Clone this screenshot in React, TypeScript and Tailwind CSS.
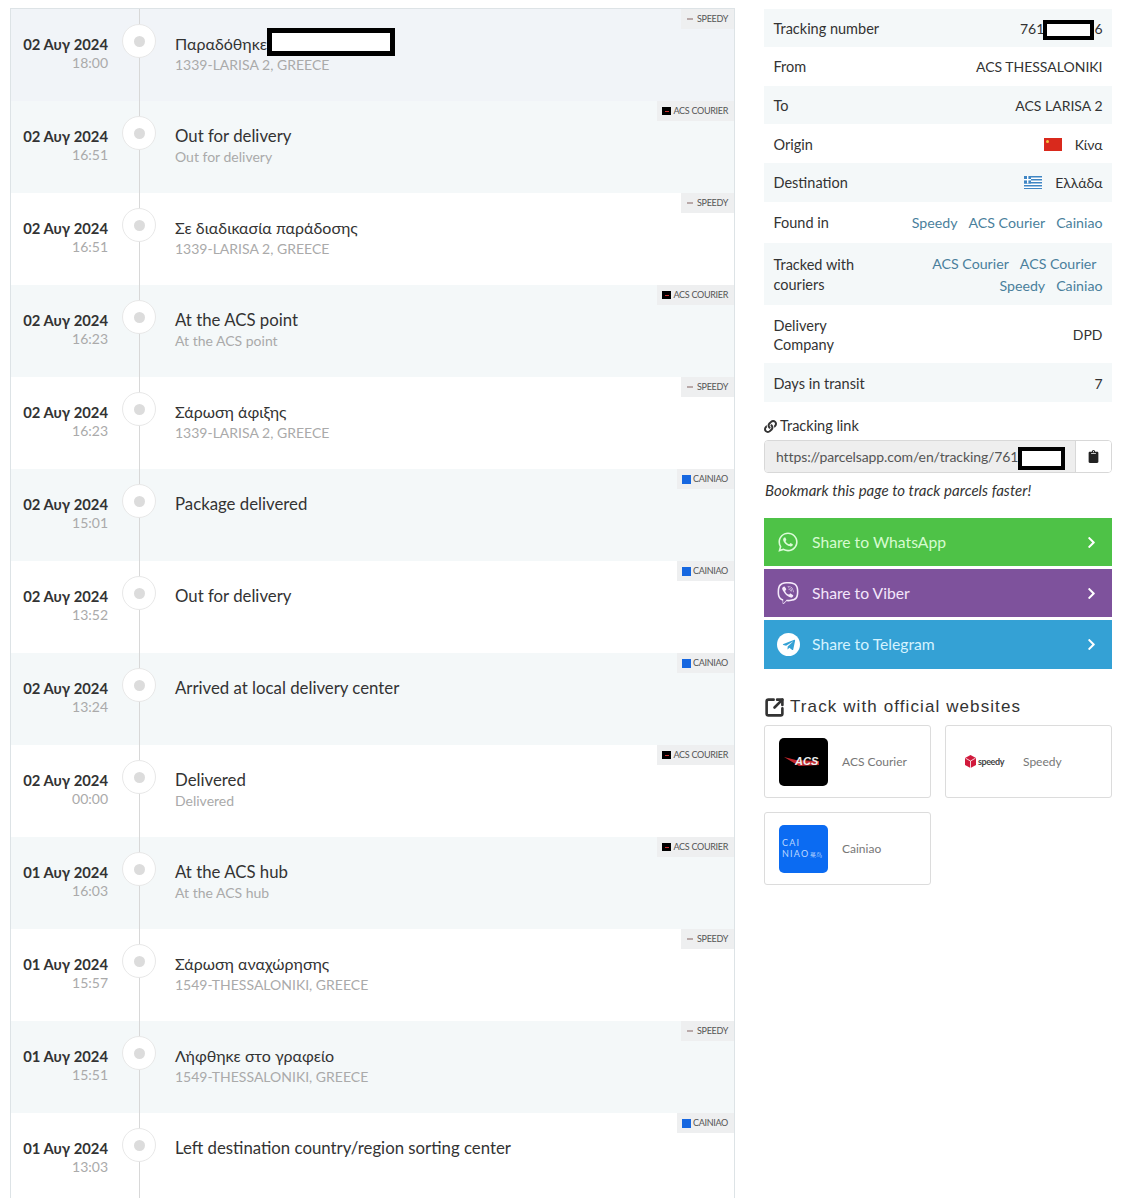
import { FaChevronRight, FaClipboard, FaLink, FaTelegramPlane, FaViber, FaWhatsapp } from "react-icons/fa";
import { LuSquareArrowOutUpRight } from "react-icons/lu";

type Courier = "speedy" | "acs" | "cainiao";

type TrackingEvent = {
  date: string;
  time: string;
  title: string;
  sub?: string;
  courier: Courier;
};

const events: TrackingEvent[] = [
  { date: "02 Αυγ 2024", time: "18:00", title: "Παραδόθηκε", sub: "1339-LARISA 2, GREECE", courier: "speedy" },
  { date: "02 Αυγ 2024", time: "16:51", title: "Out for delivery", sub: "Out for delivery", courier: "acs" },
  { date: "02 Αυγ 2024", time: "16:51", title: "Σε διαδικασία παράδοσης", sub: "1339-LARISA 2, GREECE", courier: "speedy" },
  { date: "02 Αυγ 2024", time: "16:23", title: "At the ACS point", sub: "At the ACS point", courier: "acs" },
  { date: "02 Αυγ 2024", time: "16:23", title: "Σάρωση άφιξης", sub: "1339-LARISA 2, GREECE", courier: "speedy" },
  { date: "02 Αυγ 2024", time: "15:01", title: "Package delivered", courier: "cainiao" },
  { date: "02 Αυγ 2024", time: "13:52", title: "Out for delivery", courier: "cainiao" },
  { date: "02 Αυγ 2024", time: "13:24", title: "Arrived at local delivery center", courier: "cainiao" },
  { date: "02 Αυγ 2024", time: "00:00", title: "Delivered", sub: "Delivered", courier: "acs" },
  { date: "01 Αυγ 2024", time: "16:03", title: "At the ACS hub", sub: "At the ACS hub", courier: "acs" },
  { date: "01 Αυγ 2024", time: "15:57", title: "Σάρωση αναχώρησης", sub: "1549-THESSALONIKI, GREECE", courier: "speedy" },
  { date: "01 Αυγ 2024", time: "15:51", title: "Λήφθηκε στο γραφείο", sub: "1549-THESSALONIKI, GREECE", courier: "speedy" },
  { date: "01 Αυγ 2024", time: "13:03", title: "Left destination country/region sorting center", courier: "cainiao" },
];

function CourierBadge({ courier }: { courier: Courier }) {
  return (
    <div className="absolute right-0 top-0 flex h-[20px] items-center gap-[2px] bg-[#eeeff0] pl-[5px] pr-[6px] text-[9px] tracking-[-0.3px] text-[#555]">
      {courier === "speedy" && (
        <>
          <span className="mx-[1px] h-[2px] w-[6px] bg-[#b9a9a9]" />
          <span className="ml-[1px]">SPEEDY</span>
        </>
      )}
      {courier === "acs" && (
        <>
          <span className="flex h-[8px] w-[9px] items-center justify-center bg-black">
            <span className="h-[1px] w-[4px] bg-[#c33]" />
          </span>
          <span>ACS COURIER</span>
        </>
      )}
      {courier === "cainiao" && (
        <>
          <span className="h-[9px] w-[9px] bg-[#1667e0]" />
          <span>CAINIAO</span>
        </>
      )}
    </div>
  );
}

function EventRow({ event, index }: { event: TrackingEvent; index: number }) {
  let bg = index % 2 === 1 ? "bg-[#f4f8f9]" : "bg-white";
  if (index === 0) bg = "bg-[#f1f4f8]";
  const greek = /[\u0370-\u03ff]/.test(event.title);

  return (
    <div className={`relative flex h-[92px] shrink-0 ${bg}`}>
      <div className="w-[97px] pt-[26px] text-right">
        <div className="text-[14.8px] font-bold leading-[18px] text-[#333]">{event.date}</div>
        <div className="text-[14px] leading-[20px] text-[#aaa]">{event.time}</div>
      </div>
      <div className="relative w-[63px]">
        <div className="absolute bottom-0 left-[30.5px] top-0 w-px bg-[#d8d8d8]" />
        <div className="absolute left-[14px] top-[15px] flex h-[34px] w-[34px] items-center justify-center rounded-full border border-[#e8e8e8] bg-white">
          <div className="h-[11px] w-[11px] rounded-full bg-[#dcdcdc]" />
        </div>
      </div>
      <div className="pl-[4px] pt-[23px]">
        <div
          className={`flex h-[23px] items-center leading-[23px] text-[#333] ${
            greek ? "text-[16px]" : "text-[16.8px]"
          }`}
        >
          {event.title}
          {index === 0 && (
            <span className="h-[28px] w-[128px] -translate-y-[2px] border-[5px] border-black bg-white" />
          )}
        </div>
        {event.sub && <div className="text-[14px] leading-[20px] text-[#aaa]">{event.sub}</div>}
      </div>
      <CourierBadge courier={event.courier} />
    </div>
  );
}

function InfoRow({
  label,
  tinted,
  className,
  children,
}: {
  label: React.ReactNode;
  tinted?: boolean;
  className?: string;
  children: React.ReactNode;
}) {
  return (
    <div
      className={`flex items-center justify-between px-[9.5px] text-[14px] text-[#333] ${
        tinted ? "bg-[#f4f8f9]" : "bg-white"
      } ${className}`}
    >
      <div className="shrink-0 text-[14.5px] leading-[19px]">{label}</div>
      <div className="text-right">{children}</div>
    </div>
  );
}

function CourierLink({ children }: { children: React.ReactNode }) {
  return <span className="ml-[11px] text-[14.2px] text-[#4a7f9c]">{children}</span>;
}

function ChinaFlag() {
  return (
    <svg width="18" height="13" viewBox="0 0 18 13" className="mr-[13px]">
      <rect width="18" height="13" fill="#d9291c" />
      <circle cx="3.5" cy="3.5" r="1.5" fill="#f5c542" />
    </svg>
  );
}

function GreeceFlag() {
  return (
    <svg width="18" height="13" viewBox="0 0 18 13" className="mr-[13px]">
      <rect width="18" height="13" fill="#fff" />
      {[0, 3, 6, 9, 12].map((y) => (
        <rect key={y} y={y} width="18" height="1.5" fill="#3f86c4" />
      ))}
      <rect width="7" height="7.5" fill="#3f86c4" />
      <rect x="3" width="1.4" height="7.5" fill="#fff" />
      <rect y="3" width="7" height="1.4" fill="#fff" />
    </svg>
  );
}

function ShareButton({
  color,
  label,
  text,
  height,
  icon,
}: {
  color: string;
  label: string;
  text: string;
  height: string;
  icon: React.ReactNode;
}) {
  return (
    <div className={`flex items-center pl-[13px] pr-[14px] text-[15.7px] ${color} ${height} ${text}`}>
      <div className="flex w-[35px] justify-start">{icon}</div>
      <span className="pt-[1px]">{label}</span>
      <FaChevronRight className="ml-auto text-white" size={13} />
    </div>
  );
}

function SiteCard({ name, logo }: { name: string; logo: React.ReactNode }) {
  return (
    <div className="flex h-[73px] items-center rounded-[3px] border border-[#dcdcdc] bg-white pl-[14px]">
      <div className="flex w-[49px] items-center justify-center">{logo}</div>
      <span className="ml-[14px] text-[12px] text-[#777]">{name}</span>
    </div>
  );
}

export default function App() {
  return (
    <div
      className="flex h-[1198px] gap-[29px] overflow-hidden bg-white pl-[10px] pt-[8px]"
      style={{ fontFamily: "Lato, 'Noto Sans', sans-serif" }}
    >
      <div className="flex w-[725px] shrink-0 flex-col self-start border-x border-t border-[#dde3e6]">
        {events.map((event, i) => (
          <EventRow key={i} event={event} index={i} />
        ))}
      </div>

      <div className="mt-[1px] w-[348px] shrink-0">
        <InfoRow label="Tracking number" tinted className="relative h-[38px]">
          761
          <span className="inline-block w-[50px]" />6
          <span className="absolute right-[18px] top-[11px] h-[20px] w-[51px] border-[4px] border-black bg-white" />
        </InfoRow>
        <InfoRow label="From" className="h-[39px]">ACS THESSALONIKI</InfoRow>
        <InfoRow label="To" tinted className="h-[38px]">ACS LARISA 2</InfoRow>
        <InfoRow label="Origin" className="h-[39px] pt-[1px]">
          <span className="flex items-center justify-end">
            <ChinaFlag />
            Κίνα
          </span>
        </InfoRow>
        <InfoRow label="Destination" tinted className="h-[39px]">
          <span className="flex items-center justify-end">
            <GreeceFlag />
            Ελλάδα
          </span>
        </InfoRow>
        <InfoRow label="Found in" className="h-[41px]">
          <span className="whitespace-nowrap">
            <CourierLink>Speedy</CourierLink>
            <CourierLink>ACS Courier</CourierLink>
            <CourierLink>Cainiao</CourierLink>
          </span>
        </InfoRow>
        <InfoRow
          label={<span className="leading-[20px]">Tracked with<br />couriers</span>}
          tinted
          className="h-[62px] pt-[2px]"
        >
          <div className="whitespace-nowrap pr-[6px] leading-[22px]">
            <CourierLink>ACS Courier</CourierLink>
            <CourierLink>ACS Courier</CourierLink>
          </div>
          <div className="whitespace-nowrap leading-[22px]">
            <CourierLink>Speedy</CourierLink>
            <CourierLink>Cainiao</CourierLink>
          </div>
        </InfoRow>
        <InfoRow label={<>Delivery<br />Company</>} className="h-[58px] pt-[1px]">DPD</InfoRow>
        <InfoRow label="Days in transit" tinted className="h-[39px] pt-[1px]">7</InfoRow>

        <div className="mt-[14px] flex items-center text-[14.5px] leading-[20px] text-[#333]">
          <FaLink size={13} className="mr-[3px]" />
          Tracking link
        </div>
        <div className="relative mt-[4px] flex h-[33px] overflow-hidden rounded-[4px] border border-[#d8d8d8]">
          <div className="flex flex-1 items-center bg-[#eeeeee] pl-[11px] text-[14px] tracking-[-0.1px] text-[#555]">
            https://parcelsapp.com/en/tracking/761
          </div>
          <div className="flex w-[36px] items-center justify-center border-l border-[#d8d8d8] bg-white text-[#222]">
            <FaClipboard size={13} />
          </div>
          <span className="absolute left-[253px] top-[6px] h-[23px] w-[47px] border-[4px] border-black bg-white" />
        </div>
        <div className="mt-[7px] pl-[1px] text-[15px] italic leading-[20px] tracking-[0.05px] text-[#333]">
          Bookmark this page to track parcels faster!
        </div>

        <div className="mt-[18px] flex flex-col gap-[3px]">
          <ShareButton
            color="bg-[#4ec247]"
            text="text-[#d6fbd0]"
            height="h-[48px]"
            label="Share to WhatsApp"
            icon={<FaWhatsapp size={22} className="text-[#dcfbd8]" />}
          />
          <ShareButton
            color="bg-[#7e529c]"
            text="text-[#f3e6fb]"
            height="h-[48px]"
            label="Share to Viber"
            icon={<FaViber size={22} className="text-[#f5eafb]" />}
          />
          <ShareButton
            color="bg-[#34a1d5]"
            text="text-[#d5f3ff]"
            height="h-[49px]"
            label="Share to Telegram"
            icon={
              <span className="flex h-[23px] w-[23px] items-center justify-center rounded-full bg-white text-[#34a1d5]">
                <FaTelegramPlane size={14} />
              </span>
            }
          />
        </div>

        <div className="mt-[27px] flex items-center text-[#333]">
          <LuSquareArrowOutUpRight size={21} strokeWidth={3} className="mr-[5px]" />
          <span
            className="text-[17px] leading-[22px] tracking-[1.1px]"
            style={{ fontFamily: "'Liberation Sans', sans-serif" }}
          >
            Track with official websites
          </span>
        </div>

        <div className="mt-[7px] grid grid-cols-[167px_167px] gap-x-[14px] gap-y-[14px]">
          <SiteCard
            name="ACS Courier"
            logo={
              <svg width="49" height="48" viewBox="0 0 49 48">
                <rect width="49" height="48" rx="5" fill="#000" />
                <path d="M5 19 L17 22 L40 23 L40 27 L20 28 Z" fill="#c1272d" />
                <text x="16" y="27" fontSize="11" fontWeight="900" fontStyle="italic" fill="#eee" fontFamily="Liberation Sans">
                  ACS
                </text>
              </svg>
            }
          />
          <SiteCard
            name="Speedy"
            logo={
              <span className="flex items-center">
                <svg width="11" height="13" viewBox="0 0 11 13">
                  <path d="M5.5 0 L11 3 V10 L5.5 13 L0 10 V3 Z" fill="#d11a3c" />
                  <path d="M5.5 6 L5.5 13 M0.5 3.2 L5.5 6 L10.5 3.2" stroke="#fff" strokeWidth="0.8" fill="none" />
                </svg>
                <span className="ml-[2px] text-[9px] font-bold tracking-[-0.4px] text-[#444]">speedy</span>
              </span>
            }
          />
          <SiteCard
            name="Cainiao"
            logo={
              <span className="flex h-[48px] w-[49px] flex-col justify-center rounded-[5px] bg-[#0b6bf2] pl-[3px] text-[9px] leading-[11px] tracking-[1.2px] text-[#bcd8ff]">
                <span>CAI</span>
                <span className="whitespace-nowrap">NIAO<span className="ml-[1px] text-[6px] tracking-normal">菜鸟</span></span>
              </span>
            }
          />
        </div>
      </div>
    </div>
  );
}
